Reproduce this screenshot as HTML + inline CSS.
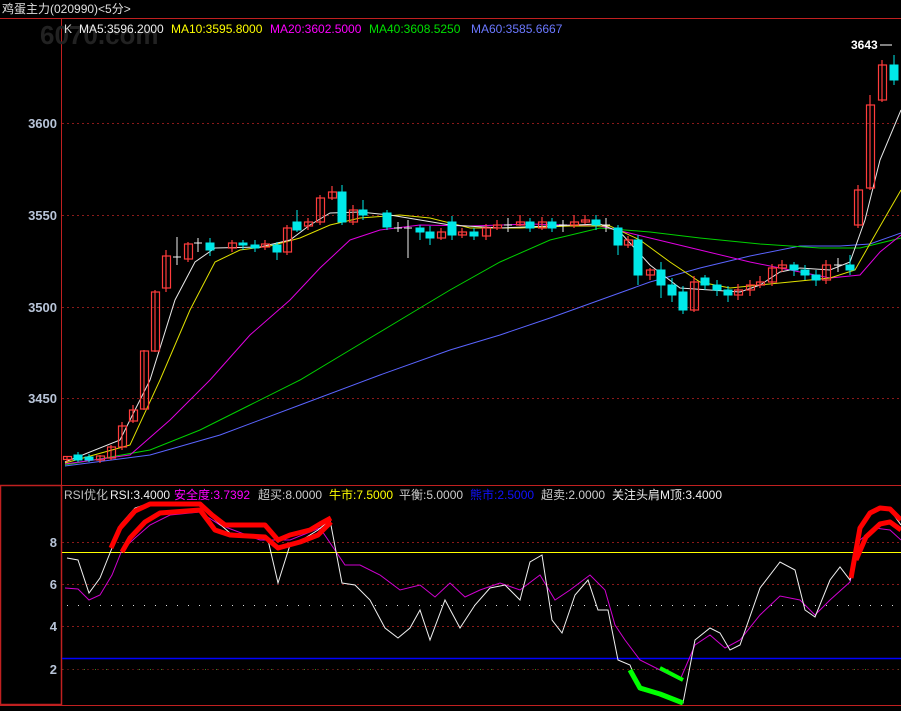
<!DOCTYPE html>
<html><head><meta charset="utf-8"><style>
html,body{margin:0;padding:0;background:#000;width:901px;height:711px;overflow:hidden}
svg{display:block}
text{font-family:"Liberation Sans","Noto Sans CJK SC",sans-serif}
</style></head><body>
<svg width="901" height="711" viewBox="0 0 901 711" xmlns="http://www.w3.org/2000/svg">
<rect width="901" height="711" fill="#000"/>
<text x="2" y="13" font-size="12" fill="#e0e0e0">鸡蛋主力(020990)&lt;5分&gt;</text>
<line x1="0" y1="18.5" x2="901" y2="18.5" stroke="#c02020"/>
<line x1="61.5" y1="19" x2="61.5" y2="485" stroke="#c02020"/>
<text x="40" y="44" font-size="26" font-weight="bold" fill="#222">6070.com</text>
<g font-size="12">
<text x="64" y="33" fill="#ddd">K</text>
<text x="79" y="33" fill="#eee">MA5:3596.2000</text>
<text x="171" y="33" fill="#ffff00">MA10:3595.8000</text>
<text x="270" y="33" fill="#ff00ff">MA20:3602.5000</text>
<text x="369" y="33" fill="#00e000">MA40:3608.5250</text>
<text x="471" y="33" fill="#6b78ff">MA60:3585.6667</text>
</g>
<g stroke="#8a1a1a" stroke-dasharray="2,3">
<line x1="62" y1="123.5" x2="901" y2="123.5"/><line x1="62" y1="215.5" x2="901" y2="215.5"/>
<line x1="62" y1="307.5" x2="901" y2="307.5"/><line x1="62" y1="398.5" x2="901" y2="398.5"/>
</g>
<g font-size="13" font-weight="bold" fill="#b8c4d8" text-anchor="end">
<text x="57" y="128">3600</text><text x="57" y="220">3550</text><text x="57" y="312">3500</text><text x="57" y="403">3450</text>
</g>
<text x="851" y="49" font-size="12" font-weight="bold" fill="#fff">3643</text>
<line x1="880" y1="45" x2="892" y2="45" stroke="#fff"/>
<!-- MA lines -->
<g fill="none" stroke-width="1">
<polyline stroke="#5a64ff" points="65,466 150,455 220,435 300,405 380,375 450,350 500,335 550,318 600,300 650,282 700,268 750,256 800,246 840,246 870,244 901,233"/>
<polyline stroke="#00d000" points="65,465 150,450 200,430 250,405 300,380 350,350 400,320 450,290 500,262 550,240 600,228 650,232 700,238 760,244 820,248 860,248 901,238"/>
<polyline stroke="#e000e0" points="65,464 130,455 170,420 210,380 250,335 290,300 320,268 350,240 380,230 420,225 470,226 530,224 600,226 650,238 700,250 750,262 790,270 830,278 860,275 880,252 901,235"/>
<polyline stroke="#e0e000" points="65,463 130,445 160,380 190,310 215,262 240,250 270,246 300,238 330,225 360,218 400,215 430,218 470,228 520,228 570,226 610,226 640,240 670,262 700,282 730,288 760,285 790,282 830,278 855,270 875,235 901,190"/>
<polyline stroke="#e8e8e8" points="65,462 120,440 150,380 175,300 195,262 215,248 260,247 290,240 310,225 330,213 360,212 390,215 420,220 450,225 500,228 550,226 600,224 620,232 650,265 680,288 710,290 740,292 760,285 780,272 800,268 830,270 850,262 865,220 880,160 901,110"/>
</g>
<!-- up candles red hollow -->
<g fill="none" stroke="#ff3c3c" stroke-width="1.2">
<path d="M67,456V462M100,455V463M111,445V460M122,422V450M133,405V423M144,350V410M155,290V352M166,250V292M188,242V262M232,240V252M265,240V250M287,225V255M308,218V230M320,195V225M332,186V200M353,205V225M441,228V240M462,228V238M486,224V240M497,220V230M520,215V226M542,217V230M574,215V228M585,215V224M628,236V248M650,268V280M694,276V312M738,284V300M750,280V296M760,276V288M772,264V286M782,260V272M826,260V284M858,185V228M870,95V190M882,60V102"/>
<rect x="63.5" y="456.5" width="8" height="3"/><rect x="96.5" y="456" width="8" height="4"/>
<rect x="107.5" y="447" width="8" height="11"/><rect x="118.5" y="426" width="8" height="21"/>
<rect x="129.5" y="410" width="8" height="11"/><rect x="140.5" y="351" width="8" height="58"/>
<rect x="151.5" y="292" width="8" height="59"/><rect x="162.5" y="256" width="8" height="32"/>
<rect x="184.5" y="244" width="8" height="15"/><rect x="228.5" y="243" width="8" height="5"/>
<rect x="261.5" y="244" width="8" height="3"/><rect x="283.5" y="228" width="8" height="24"/>
<rect x="304.5" y="222" width="8" height="4"/><rect x="316.5" y="198" width="8" height="24"/>
<rect x="328.5" y="192" width="8" height="6"/><rect x="349.5" y="210" width="8" height="12"/>
<rect x="437.5" y="232" width="8" height="6"/><rect x="458.5" y="232" width="8" height="3"/>
<rect x="482.5" y="228" width="8" height="8"/><rect x="493.5" y="225" width="8" height="3"/>
<rect x="516.5" y="222" width="8" height="3"/><rect x="538.5" y="222" width="8" height="6"/>
<rect x="570.5" y="222" width="8" height="3"/><rect x="581.5" y="220" width="8" height="2"/>
<rect x="624.5" y="240" width="8" height="5"/><rect x="646.5" y="270" width="8" height="5"/>
<rect x="690.5" y="282" width="8" height="28"/><rect x="734.5" y="290" width="8" height="5"/>
<rect x="746.5" y="285" width="8" height="5"/><rect x="756.5" y="282" width="8" height="3"/>
<rect x="768.5" y="268" width="8" height="14"/><rect x="778.5" y="265" width="8" height="3"/>
<rect x="822.5" y="265" width="8" height="15"/><rect x="854.5" y="190" width="8" height="35"/>
<rect x="866.5" y="105" width="8" height="83"/><rect x="878.5" y="65" width="8" height="35"/>
</g>
<!-- down candles cyan -->
<g fill="#00e8e8" stroke="#00e8e8">
<path d="M78,452V462M89,454V462M210,238V256M243,240V250M255,240V252M277,242V260M297,210V232M342,185V225M363,200V220M387,210V230M420,225V240M430,226V245M452,216V240M474,228V240M530,218V232M552,218V232M596,215V230M618,225V255M638,235V285M661,262V298M672,278V302M683,286V314M705,275V290M717,280V296M728,286V302M794,262V276M805,265V280M816,270V286M850,255V275M894,55V85"/>
<rect x="74" y="455" width="8" height="5"/><rect x="85" y="457" width="8" height="3"/>
<rect x="206" y="243" width="8" height="7"/><rect x="239" y="243" width="8" height="2"/>
<rect x="251" y="245" width="8" height="3"/><rect x="273" y="245" width="8" height="7"/>
<rect x="293" y="222" width="8" height="8"/><rect x="338" y="192" width="8" height="30"/>
<rect x="359" y="210" width="8" height="5"/><rect x="383" y="213" width="8" height="14"/>
<rect x="416" y="228" width="8" height="4"/><rect x="426" y="232" width="8" height="6"/>
<rect x="448" y="222" width="8" height="13"/><rect x="470" y="232" width="8" height="4"/>
<rect x="526" y="222" width="8" height="6"/><rect x="548" y="222" width="8" height="6"/>
<rect x="592" y="220" width="8" height="5"/><rect x="614" y="228" width="8" height="17"/>
<rect x="634" y="240" width="8" height="35"/><rect x="657" y="270" width="8" height="15"/>
<rect x="668" y="285" width="8" height="10"/><rect x="679" y="292" width="8" height="18"/>
<rect x="701" y="278" width="8" height="7"/><rect x="713" y="285" width="8" height="5"/>
<rect x="724" y="290" width="8" height="5"/><rect x="790" y="265" width="8" height="5"/>
<rect x="801" y="270" width="8" height="5"/><rect x="812" y="275" width="8" height="5"/>
<rect x="846" y="265" width="8" height="5"/><rect x="890" y="65" width="8" height="15"/>
</g>
<!-- white dojis -->
<g stroke="#f0f0f0"><path d="M177,237V265M173,257H181M198,238V252M194,243H202M398,222V232M394,228H402M408,220V258M404,228H412M508,218V232M504,225H512M563,220V232M559,225H567M606,218V232M602,225H610M838,258V272M834,265H842"/></g>

<!-- lower panel -->
<line x1="0" y1="485.5" x2="901" y2="485.5" stroke="#c02020"/>
<rect x="0.5" y="485.5" width="61" height="219" fill="none" stroke="#c02020" stroke-width="1.5"/>
<line x1="0" y1="705.5" x2="901" y2="705.5" stroke="#c02020"/>
<g stroke="#8a1a1a" stroke-dasharray="2,3">
<line x1="62" y1="542.5" x2="901" y2="542.5"/><line x1="62" y1="584.5" x2="901" y2="584.5"/>
<line x1="62" y1="626.5" x2="901" y2="626.5"/>
</g>
<line x1="62" y1="669.5" x2="901" y2="669.5" stroke="#2a8a2a" stroke-dasharray="1,10"/>
<line x1="62" y1="669.5" x2="901" y2="669.5" stroke="#8a1a1a" stroke-dasharray="2,3" opacity=".6"/>
<line x1="67" y1="605.5" x2="901" y2="605.5" stroke="#ddd" stroke-dasharray="1,10"/>
<line x1="62" y1="552.5" x2="901" y2="552.5" stroke="#ffff00"/>
<line x1="62" y1="658.5" x2="901" y2="658.5" stroke="#0000ff" stroke-width="1.5"/>
<g font-size="13" font-weight="bold" fill="#b8c4d8" text-anchor="end">
<text x="57" y="547">8</text><text x="57" y="589">6</text><text x="57" y="631">4</text><text x="57" y="674">2</text>
</g>
<g font-size="12">
<text x="64" y="499" fill="#c0c0c0">RSI优化</text>
<text x="110" y="499" fill="#eee">RSI:3.4000</text>
<text x="174" y="499" fill="#ff00ff">安全度:3.7392</text>
<text x="258" y="499" fill="#ccc">超买:8.0000</text>
<text x="329" y="499" fill="#ffff00">牛市:7.5000</text>
<text x="399" y="499" fill="#ccc">平衡:5.0000</text>
<text x="470" y="499" fill="#1010ff">熊市:2.5000</text>
<text x="541" y="499" fill="#ccc">超卖:2.0000</text>
<text x="612" y="499" fill="#eee">关注头肩M顶:3.4000</text>
</g>
<g fill="none" stroke-width="1">
<polyline stroke="#d000d0" points="65,588 78,589 89,600 100,595 112,575 122,550 135,538 150,525 170,515 200,512 220,525 260,540 290,540 320,528 345,565 360,565 380,575 400,590 420,585 435,597 450,583 465,597 480,590 500,583 520,590 540,575 555,600 570,590 590,575 605,590 615,625 625,640 640,660 660,670 680,680 695,645 710,635 725,648 740,640 760,615 780,596 800,600 815,615 830,600 850,582 860,540 875,528 890,530 901,540"/>
<polyline stroke="#f0f0f0" points="67,558 78,560 89,593 100,578 112,548 120,525 135,508 150,503 200,503 215,520 230,533 260,537 268,540 278,583 290,545 305,538 318,530 330,520 342,583 355,585 370,600 385,628 398,638 410,628 420,610 430,640 445,600 460,628 475,605 490,588 505,585 520,600 530,562 542,555 552,620 562,633 575,595 588,580 598,610 608,610 618,660 630,665 640,690 660,695 683,703 695,640 710,628 720,633 730,650 740,645 760,588 780,562 795,570 805,610 815,617 830,580 840,567 850,580 860,525 875,510 890,510 901,525"/>
</g>
<g fill="none" stroke="#ff0000" stroke-width="5" stroke-linejoin="round">
<polyline points="111,548 120,528 135,511 150,504 200,504 212,515 225,525 265,525 278,540 290,535 310,530 320,524 331,518"/>
<polyline points="122,552 130,538 145,522 160,513 200,510 215,530 230,535 265,537 278,548 300,542 318,535 331,522"/>
<polyline points="851,578 860,528 870,513 880,508 890,509 901,520"/>
<polyline points="856,560 866,537 880,524 890,522 901,530"/>
</g>
<polyline fill="none" stroke="#00ff00" stroke-width="5" stroke-linejoin="round" points="630,670 640,688 660,694 683,703"/>
<polyline fill="none" stroke="#00ff00" stroke-width="4" points="660,668 683,680"/>
</svg>
</body></html>
